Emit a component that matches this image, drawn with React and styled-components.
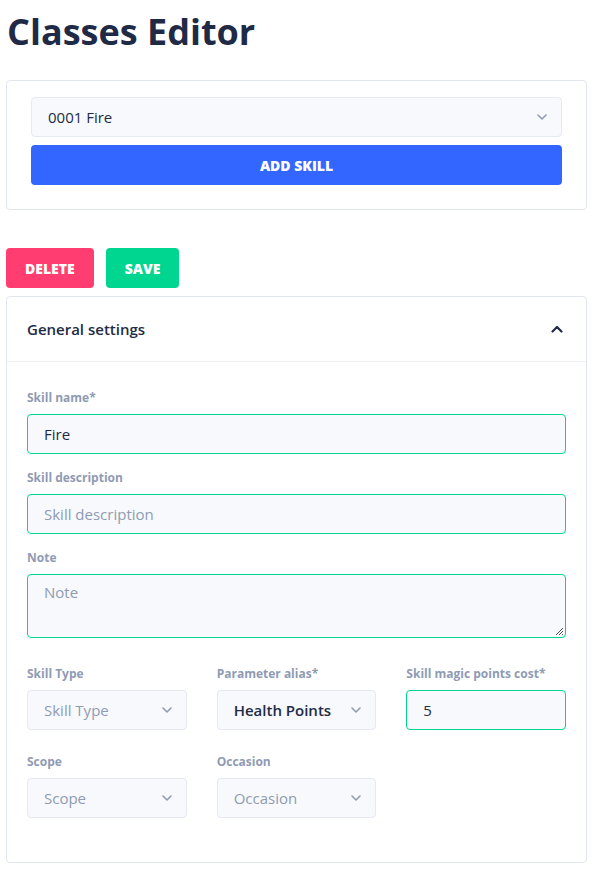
import React from "react";
import styled, { createGlobalStyle } from "styled-components";

const Global = createGlobalStyle`
  html, body { margin: 0; padding: 0; background: #fff; }
  body { font-family: "Open Sans", "Noto Sans", sans-serif; color: #222b45; }
  * { box-sizing: border-box; }
`;

const Page = styled.div`
  padding: 6px 7px 0 6px;
`;

const Title = styled.h1`
  margin: 0 0 0 1px;
  height: 74px;
  padding-top: 1px;
  font-size: 36px;
  line-height: 50px;
  font-weight: 700;
  color: #1f2a47;
  letter-spacing: 0;
`;

const Card = styled.div`
  border: 1px solid #e1e5ee;
  border-radius: 4px;
  background: #fff;
`;

const TopCard = styled(Card)`
  padding: 16px 24px 24px 24px;
  display: flex;
  flex-direction: column;
  gap: 8px;
`;

const SelectBox = styled.div`
  height: 40px;
  display: flex;
  align-items: center;
  justify-content: space-between;
  padding: 0 14px 0 16px;
  background: #f7f9fc;
  border: 1px solid #e4e9f2;
  border-radius: 4px;
  font-size: 15px;
  color: ${(p) => (p.$placeholder ? "#8f9bb3" : "#222b45")};
  font-weight: ${(p) => (p.$strong ? 600 : 400)};
`;

const Button = styled.button`
  height: 40px;
  border: none;
  border-radius: 4px;
  background: ${(p) => p.$bg};
  color: #fff;
  font-family: "Open Sans", "Noto Sans", sans-serif;
  font-weight: 800;
  font-size: 14px;
  text-transform: uppercase;
  padding: 0 19px;
  cursor: pointer;
  width: ${(p) => (p.$full ? "100%" : "auto")};
`;

const Actions = styled.div`
  display: flex;
  gap: 12px;
  margin-top: 38px;
  margin-bottom: 8px;
`;

const Accordion = styled(Card)``;

const AccHeader = styled.div`
  height: 65px;
  display: flex;
  align-items: center;
  justify-content: space-between;
  padding: 0 23px 0 20px;
  border-bottom: 1px solid #edf1f7;
  font-size: 15px;
  font-weight: 600;
  color: #222b45;
`;

const AccBody = styled.div`
  padding: 28px 20px 44px 20px;
  display: flex;
  flex-direction: column;
`;

const Field = styled.div`
  display: flex;
  flex-direction: column;
  margin-bottom: ${(p) => p.$mb ?? 16}px;
`;

const Label = styled.label`
  font-size: 12px;
  font-weight: 700;
  line-height: 16px;
  color: #8f9bb3;
  margin-bottom: 8px;
  white-space: nowrap;
`;

const Input = styled.div`
  height: ${(p) => p.$h || 40}px;
  display: flex;
  align-items: ${(p) => (p.$area ? "flex-start" : "center")};
  padding: ${(p) => (p.$area ? "6px 16px" : "0 16px")};
  background: #f7f9fc;
  border: 1px solid #00d68f;
  border-radius: 4px;
  font-size: 15px;
  line-height: 22px;
  color: ${(p) => (p.$placeholder ? "#8f9bb3" : "#222b45")};
  position: relative;
`;

const Grip = styled.svg`
  position: absolute;
  right: 1px;
  bottom: 1px;
`;

const Grid = styled.div`
  display: grid;
  grid-template-columns: repeat(3, 1fr);
  column-gap: 30px;
  row-gap: 24px;
`;

const Chevron = ({ color = "#8f9bb3", w = 10, stroke = 1.6 }) => (
  <svg width={w} height={w * 0.6} viewBox="0 0 10 6" fill="none">
    <path d="M1 1 L5 5 L9 1" stroke={color} strokeWidth={stroke} strokeLinecap="round" strokeLinejoin="round" />
  </svg>
);

const ChevronUp = () => (
  <svg width="12" height="8" viewBox="0 0 12 8" fill="none">
    <path d="M1.5 6.5 L6 2 L10.5 6.5" stroke="#222b45" strokeWidth="2.2" strokeLinecap="round" strokeLinejoin="round" />
  </svg>
);

export default function App() {
  return (
    <Page>
      <Global />
      <Title>Classes Editor</Title>
      <TopCard>
        <SelectBox>
          <span>0001 Fire</span>
          <Chevron />
        </SelectBox>
        <Button $bg="#3366ff" $full>Add skill</Button>
      </TopCard>
      <Actions>
        <Button $bg="#ff3d71">Delete</Button>
        <Button $bg="#00d68f">Save</Button>
      </Actions>
      <Accordion>
        <AccHeader>
          <span>General settings</span>
          <ChevronUp />
        </AccHeader>
        <AccBody>
          <Field>
            <Label>Skill name*</Label>
            <Input>Fire</Input>
          </Field>
          <Field>
            <Label>Skill description</Label>
            <Input $placeholder>Skill description</Input>
          </Field>
          <Field $mb={28}>
            <Label>Note</Label>
            <Input $placeholder $area $h={64}>
              Note
              <Grip width="10" height="10" viewBox="0 0 10 10">
                <path d="M9 2 L2 9 M9 5 L5 9 M9 8 L8 9" stroke="#555" strokeWidth="1" />
              </Grip>
            </Input>
          </Field>
          <Grid>
            <Field $mb={0}>
              <Label>Skill Type</Label>
              <SelectBox $placeholder>
                <span>Skill Type</span>
                <Chevron />
              </SelectBox>
            </Field>
            <Field $mb={0}>
              <Label>Parameter alias*</Label>
              <SelectBox $strong>
                <span>Health Points</span>
                <Chevron />
              </SelectBox>
            </Field>
            <Field $mb={0}>
              <Label>Skill magic points cost*</Label>
              <Input>5</Input>
            </Field>
            <Field $mb={0}>
              <Label>Scope</Label>
              <SelectBox $placeholder>
                <span>Scope</span>
                <Chevron />
              </SelectBox>
            </Field>
            <Field $mb={0}>
              <Label>Occasion</Label>
              <SelectBox $placeholder>
                <span>Occasion</span>
                <Chevron />
              </SelectBox>
            </Field>
          </Grid>
        </AccBody>
      </Accordion>
    </Page>
  );
}
